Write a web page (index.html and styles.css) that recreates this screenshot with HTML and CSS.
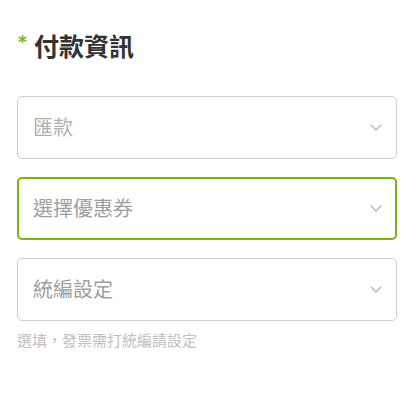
FILE: index.html
```html
<!DOCTYPE html>
<html lang="zh-Hant">
<head>
<meta charset="utf-8">
<link rel="stylesheet" href="styles.css">
</head>
<body>
<section class="payment">
  <h2 class="title"><span class="req">*</span>付款資訊</h2>
  <div class="field">
    <span class="placeholder light">匯款</span>
    <svg class="chev" width="12" height="7" viewBox="0 0 12 7"><path d="M0.8 0.8 L6 6 L11.2 0.8" fill="none" stroke="#b8b8b8" stroke-width="1.4"/></svg>
  </div>
  <div class="field active">
    <span class="placeholder">選擇優惠券</span>
    <svg class="chev" width="12" height="7" viewBox="0 0 12 7"><path d="M0.8 0.8 L6 6 L11.2 0.8" fill="none" stroke="#b8b8b8" stroke-width="1.4"/></svg>
  </div>
  <div class="field">
    <span class="placeholder">統編設定</span>
    <svg class="chev" width="12" height="7" viewBox="0 0 12 7"><path d="M0.8 0.8 L6 6 L11.2 0.8" fill="none" stroke="#b8b8b8" stroke-width="1.4"/></svg>
  </div>
  <p class="hint">選填，發票需打統編請設定</p>
</section>
</body>
</html>
```
FILE: styles.css
```css
html, body {
  margin: 0;
  padding: 0;
  background: #fff;
  font-family: "Noto Sans CJK TC", "Noto Sans", sans-serif;
}
.payment {
  padding: 26px 17px 0 17px;
  display: flex;
  flex-direction: column;
}
.title {
  margin: 0 0 32px 0;
  font-size: 25px;
  line-height: 38px;
  font-weight: 700;
  color: #333;
  display: flex;
  align-items: center;
}
.req {
  color: #7ab317;
  font-family: "DejaVu Sans", sans-serif;
  font-size: 17px;
  font-weight: 700;
  margin-right: 7px;
  margin-left: 1px;
  position: relative;
  top: -3px;
}
.field {
  box-sizing: border-box;
  height: 63px;
  border: 1px solid #cfcfcf;
  border-radius: 5px;
  display: flex;
  align-items: center;
  justify-content: space-between;
  padding: 0 14px 0 15px;
  margin-bottom: 18px;
}
.field.active {
  border: 2px solid #7ab317;
  padding: 0 13px 0 14px;
}
.placeholder {
  font-size: 20px;
  color: #9e9e9e;
  position: relative;
  top: -1px;
}
.placeholder.light {
  color: #b0b0b0;
}
.hint {
  margin: -10px 0 0 0;
  font-size: 15px;
  color: #c0c0c0;
}
```
